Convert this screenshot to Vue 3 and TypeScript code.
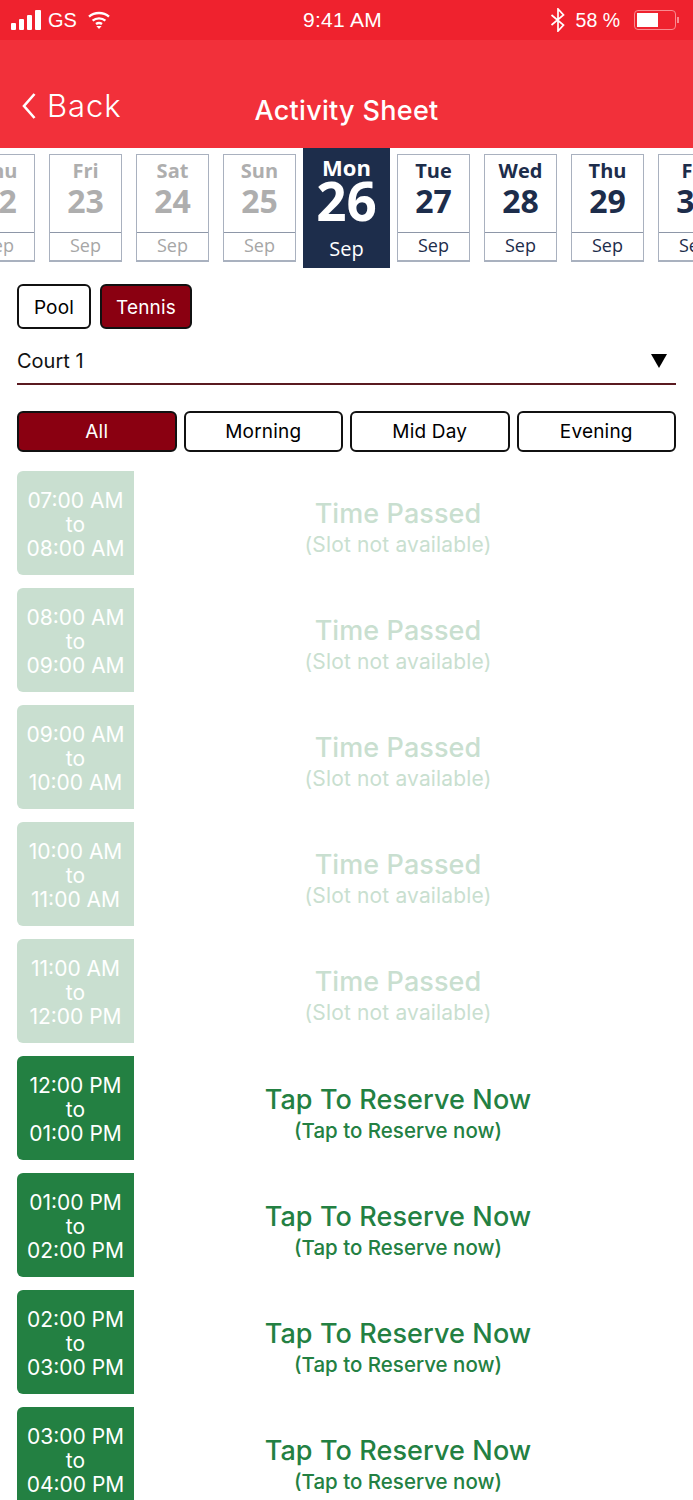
<template>
  <div class="screen">
    <div class="status">
      <div class="status-left">
        <svg class="signal" width="32" height="20" viewBox="0 0 32 20">
          <rect x="0" y="13" width="5" height="7" rx="1" />
          <rect x="8" y="9" width="5" height="11" rx="1" />
          <rect x="16" y="5" width="5" height="15" rx="1" />
          <rect x="24" y="0" width="6" height="20" rx="1" />
        </svg>
        <span>GS</span>
        <svg class="wifi" width="22" height="18" viewBox="0 0 22 18" fill="none" stroke="#fff" stroke-width="2.4">
          <path d="M1 5.6C6.6 .8 15.4 .8 21 5.6" />
          <path d="M4.6 9.6C8.2 6.6 13.8 6.6 17.4 9.6" />
          <path d="M8 13c1.8-1.3 4.2-1.3 6 0" />
          <path d="M11 18l-2.6-3h5.2z" fill="#fff" stroke="none" />
        </svg>
      </div>
      <div class="clock">9:41 AM</div>
      <div class="status-right">
        <svg width="16" height="24" viewBox="0 0 16 24" fill="none" stroke="#fff" stroke-width="1.7">
          <path d="M1.5 7l12 10-5.5 6V1l5.5 6-12 10" />
        </svg>
        <span class="pct">58 %</span>
        <div class="battery"><div class="battery-fill" :style="{ width: '58%' }" /></div>
        <div class="battery-tip" />
      </div>
    </div>

    <div class="nav">
      <div class="back">
        <svg width="16" height="28" viewBox="0 0 16 28" fill="none" stroke="#fff" stroke-width="2.6">
          <path d="M13.5 2 3 14l10.5 12" />
        </svg>
        <span>Back</span>
      </div>
      <div class="title">Activity Sheet</div>
    </div>

    <div class="dates">
      <div
        v-for="d in days"
        :key="d.num"
        class="date"
        :class="{ selected: d.selected, past: d.past }"
      >
        <div class="date-top">
          <div class="dow">{{ d.dow }}</div>
          <div class="num">{{ d.num }}</div>
        </div>
        <div class="month">Sep</div>
      </div>
    </div>

    <div class="content">
      <div class="tabs">
        <div class="btn tab">Pool</div>
        <div class="btn tab active">Tennis</div>
      </div>

      <div class="court">
        <span>Court 1</span>
        <svg width="16" height="14" viewBox="0 0 16 14"><path d="M0 0h16L8 14z" /></svg>
      </div>

      <div class="filters">
        <div
          v-for="(f, i) in filters"
          :key="f"
          class="btn filter"
          :class="{ active: i === 0 }"
        >{{ f }}</div>
      </div>

      <div class="slots">
        <div
          v-for="s in slots"
          :key="s.from"
          class="slot"
          :class="{ passed: s.passed }"
        >
          <div class="time">
            <div>{{ s.from }}</div>
            <div>to</div>
            <div>{{ s.to }}</div>
          </div>
          <div class="info">
            <div class="info-main">{{ s.passed ? 'Time Passed' : 'Tap To Reserve Now' }}</div>
            <div class="info-sub">{{ s.passed ? '(Slot not available)' : '(Tap to Reserve now)' }}</div>
          </div>
        </div>
      </div>
    </div>
  </div>
</template>

<script setup lang="ts">
interface Day {
  dow: string
  num: string
  past?: boolean
  selected?: boolean
}

interface Slot {
  from: string
  to: string
  passed: boolean
}

const days: Day[] = [
  { dow: 'Thu', num: '22', past: true },
  { dow: 'Fri', num: '23', past: true },
  { dow: 'Sat', num: '24', past: true },
  { dow: 'Sun', num: '25', past: true },
  { dow: 'Mon', num: '26', selected: true },
  { dow: 'Tue', num: '27' },
  { dow: 'Wed', num: '28' },
  { dow: 'Thu', num: '29' },
  { dow: 'Fri', num: '30' },
]

const filters = ['All', 'Morning', 'Mid Day', 'Evening']

const slots: Slot[] = [
  { from: '07:00 AM', to: '08:00 AM', passed: true },
  { from: '08:00 AM', to: '09:00 AM', passed: true },
  { from: '09:00 AM', to: '10:00 AM', passed: true },
  { from: '10:00 AM', to: '11:00 AM', passed: true },
  { from: '11:00 AM', to: '12:00 PM', passed: true },
  { from: '12:00 PM', to: '01:00 PM', passed: false },
  { from: '01:00 PM', to: '02:00 PM', passed: false },
  { from: '02:00 PM', to: '03:00 PM', passed: false },
  { from: '03:00 PM', to: '04:00 PM', passed: false },
]
</script>

<style>
html,
body {
  margin: 0;
  background: #fff;
}
</style>

<style scoped>
.screen {
  width: 693px;
  height: 1500px;
  overflow: hidden;
  background: #fff;
  font-family: Inter, "Liberation Sans", sans-serif;
}

.status {
  height: 40px;
  background: #ef222e;
  color: #fff;
  display: grid;
  grid-template-columns: 1fr auto 1fr;
  align-items: center;
  padding: 0 14px 0 11px;
  font-family: "Liberation Sans", sans-serif;
  font-size: 20px;
}

.status-left {
  display: flex;
  align-items: center;
  gap: 5px;
}

.signal {
  fill: #fff;
}

.wifi {
  margin-left: 6px;
}

.clock {
  font-size: 21px;
  letter-spacing: 0.3px;
  margin-right: 5px;
}

.status-right {
  display: flex;
  align-items: center;
  justify-content: flex-end;
}

.pct {
  margin: 0 14px 0 10px;
  font-size: 19.5px;
}

.battery {
  width: 42px;
  height: 20px;
  box-sizing: border-box;
  padding: 2px;
  border: 1px solid #f98b90;
  border-radius: 4px;
}

.battery-fill {
  height: 100%;
  background: #fff;
}

.battery-tip {
  width: 2px;
  height: 6px;
  margin-left: 1px;
  background: #f98b90;
}

.nav {
  height: 108px;
  background: #f2303a;
  color: #fff;
  position: relative;
}

.back {
  position: absolute;
  left: 21px;
  top: 50px;
  display: flex;
  align-items: center;
  gap: 10px;
  font-size: 31px;
  font-weight: 300;
  letter-spacing: 0.9px;
  line-height: 32px;
}

.title {
  padding-top: 55px;
  text-align: center;
  font-size: 27px;
  font-weight: 500;
  letter-spacing: 0.3px;
  line-height: 32px;
}

.dates {
  display: flex;
  gap: 14px;
  margin-left: -38px;
  width: 800px;
  height: 120px;
  font-family: "Open Sans", sans-serif;
  color: #1d2d4b;
}

.date {
  flex: none;
  width: 73px;
  height: 108px;
  margin-top: 6px;
  box-sizing: border-box;
  border: 1px solid #a9b1bf;
  border-bottom-width: 2px;
  display: flex;
  flex-direction: column;
  text-align: center;
}

.date.past {
  color: #aeaeae;
}

.date-top {
  height: 78px;
  box-sizing: border-box;
  border-bottom: 1px solid #8e97a8;
}

.dow {
  font-size: 20px;
  font-weight: 700;
  line-height: 24px;
  margin-top: 4px;
}

.num {
  font-size: 32px;
  font-weight: 700;
  line-height: 36px;
}

.month {
  font-size: 18px;
  line-height: 24px;
}

.date.past .month {
  color: #a6a6a6;
}

.date.selected {
  width: 87px;
  height: 120px;
  margin: 0 -7px;
  border: 0;
  background: #1d2d4b;
  color: #fff;
}

.date.selected .date-top {
  height: 86px;
  border: 0;
}

.date.selected .dow {
  font-size: 22px;
  line-height: 28px;
  margin-top: 5px;
}

.date.selected .num {
  font-size: 53px;
  line-height: 40px;
}

.date.selected .month {
  font-size: 20px;
  line-height: 30px;
}

.content {
  padding: 16px 17px 0;
}

.btn {
  box-sizing: border-box;
  border: 2px solid #111;
  border-radius: 6px;
  display: flex;
  align-items: center;
  justify-content: center;
  color: #000;
  font-size: 19px;
  letter-spacing: 0.2px;
}

.btn.active {
  background: #8a0011;
  color: #fff;
}

.tabs {
  display: flex;
  gap: 9px;
}

.tab {
  height: 45px;
  width: 74px;
  padding-top: 1px;
}

.tab.active {
  width: 92px;
}

.court {
  height: 56px;
  box-sizing: border-box;
  border-bottom: 2px solid #5a1a20;
  display: flex;
  justify-content: space-between;
  align-items: center;
  padding: 10px 9px 0 0;
  font-size: 20px;
  color: #111;
}

.filters {
  display: grid;
  grid-template-columns: repeat(4, 1fr);
  gap: 7px;
  margin-top: 26px;
}

.filter {
  height: 41px;
}

.slots {
  display: flex;
  flex-direction: column;
  gap: 13px;
  margin-top: 19px;
}

.slot {
  display: flex;
  height: 104px;
  flex: none;
}

.time {
  width: 117px;
  box-sizing: border-box;
  padding-top: 18px;
  border-radius: 6px 0 0 6px;
  background: #238042;
  color: #fff;
  text-align: center;
  font-size: 21px;
  line-height: 24px;
}

.info {
  flex: 1;
  padding-top: 26px;
  padding-right: 14px;
  text-align: center;
  color: #238042;
}

.info-main {
  font-size: 27px;
  font-weight: 500;
  letter-spacing: 0.1px;
  line-height: 36px;
}

.info-sub {
  font-size: 20.5px;
  font-weight: 500;
  line-height: 25px;
}

.slot.passed .time {
  background: #c9dfd0;
}

.slot.passed .info {
  padding-top: 25px;
  color: #c9dfd0;
}

.slot.passed .info-sub {
  font-weight: 400;
  font-size: 21px;
  letter-spacing: 0.15px;
}
</style>
